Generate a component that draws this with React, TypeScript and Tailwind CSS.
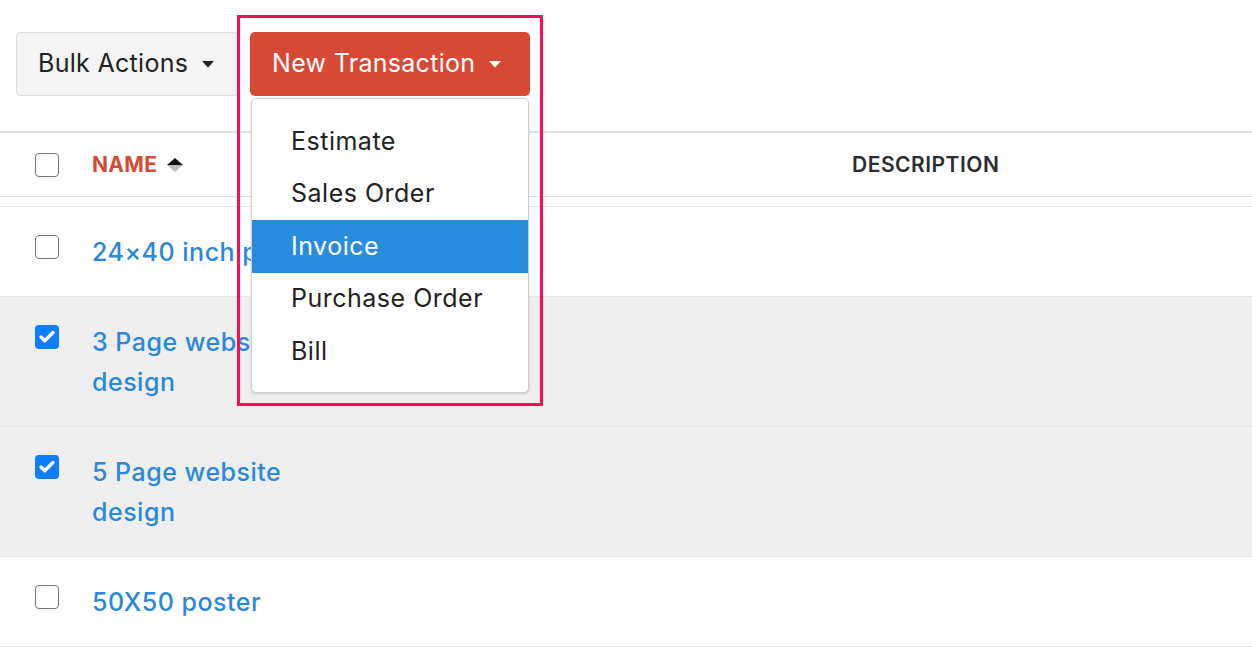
import { Check } from 'lucide-react';

const rows = [
  { name: '24×40 inch poster', checked: false },
  { name: '3 Page website design', checked: true },
  { name: '5 Page website design', checked: true },
  { name: '50X50 poster', checked: false },
];

const menuItems = ['Estimate', 'Sales Order', 'Invoice', 'Purchase Order', 'Bill'];

function Caret({ color }: { color: string }) {
  return (
    <svg width="12" height="7" viewBox="0 0 12 7" className="ml-[14px]">
      <path d="M0 0 L12 0 L6 6.5 Z" fill={color} />
    </svg>
  );
}

function Box({ checked }: { checked: boolean }) {
  if (checked) {
    return (
      <div className="w-[24px] h-[24px] shrink-0 rounded-[4px] bg-[#0b7dff] flex items-center justify-center">
        <Check className="w-[18px] h-[18px] text-white" strokeWidth={4.5} />
      </div>
    );
  }
  return <div className="w-[24px] h-[24px] shrink-0 rounded-[4px] border-[1.5px] border-[#767676] bg-white" />;
}

export default function App() {
  return (
    <div className="relative bg-white min-h-[654px] w-[1252px] overflow-hidden font-['Inter','Liberation_Sans',sans-serif]">
      {/* toolbar */}
      <div className="flex gap-3 pt-[32px] pl-[16px]">
        <button className="h-[64px] w-[222px] flex items-center pl-[21px] bg-[#f4f4f4] border border-[#dcdcdc] rounded-[4px] text-[25px] tracking-[0.3px] text-[#222]">
          Bulk Actions
          <Caret color="#222" />
        </button>
        <div className="relative">
          <button className="h-[64px] w-[280px] flex items-center pl-[22px] bg-[#d64a35] rounded-[5px] text-[25px] tracking-[0.3px] text-white">
            New Transaction
            <Caret color="#fff" />
          </button>

          {/* dropdown */}
          <div className="absolute z-20 left-[1px] top-[66px] w-[278px] h-[295px] bg-white border border-[#cfcfcf] rounded-[5px] shadow-[0_1px_3px_rgba(0,0,0,0.15)] py-[16px]">
            {menuItems.map((item) => (
              <div
                key={item}
                className={`h-[52.6px] flex items-center pl-[39px] text-[25px] tracking-[0.5px] ${
                  item === 'Invoice' ? 'bg-[#288bdc] text-white' : 'text-[#222]'
                }`}
              >
                {item}
              </div>
            ))}
          </div>

          {/* highlight frame */}
          <div className="absolute z-30 left-[-13px] top-[-17px] w-[306px] h-[391px] border-[3px] border-[#ff0a55] pointer-events-none" />
        </div>
      </div>

      {/* table */}
      <div className="mt-[35px]">
        <div className="h-[66px] flex items-center border-t-2 border-b border-[#e0e0e0] pl-[35px]">
          <Box checked={false} />
          <div className="flex items-center ml-[33px] w-[760px]">
            <span className="text-[21px] font-bold text-[#d24b33] tracking-[0.3px]">NAME</span>
            <svg width="16" height="16" viewBox="0 0 16 16" className="ml-[10px]">
              <path d="M8 1 L16 8 L0 8 Z" fill="#111" />
              <path d="M0 8 L16 8 L8 15 Z" fill="#bbb" />
            </svg>
          </div>
          <span className="text-[21px] font-semibold text-[#2b2d31] tracking-[0.5px]">DESCRIPTION</span>
        </div>

        <div className="mt-[9px] border-b border-[#e6e6e6]">
          {rows.map((r, i) => (
            <div
              key={i}
              className={`flex items-start border-t border-[#e6e6e6] pl-[35px] pt-[25px] pb-[24px] ${
                r.checked ? 'bg-[#efefef]' : 'bg-white'
              }`}
            >
              <div className="mt-[3px]">
                <Box checked={r.checked} />
              </div>
              <div className="ml-[33px] w-[240px] text-[25px] leading-[40px] font-medium tracking-[0.5px] text-[#2b88d8]">{r.name}</div>
            </div>
          ))}
        </div>
      </div>
    </div>
  );
}
